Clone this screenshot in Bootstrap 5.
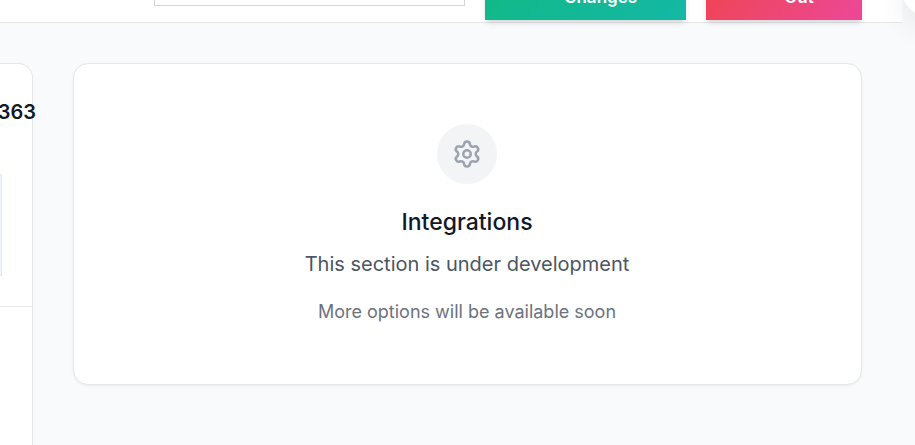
<!DOCTYPE html>
<html lang="en">
<head>
<meta charset="utf-8">
<meta name="viewport" content="width=device-width, initial-scale=1">
<title>Integrations</title>
<link href="https://cdn.jsdelivr.net/npm/bootstrap@5.3.0/dist/css/bootstrap.min.css" rel="stylesheet">
<style>
  body { font-family: Inter, "Liberation Sans", sans-serif; background: #f9fafb; color: #111827; }
  .page-shell { background: #f8fafc; overflow: hidden; }
  .topbar { height: 23px; margin-right: 13px; padding-right: 40px; gap: 20px; border-bottom: 1px solid #e5e7eb; }
  .search-box { flex: 0 1 311px; height: 50px; margin-bottom: 16px; border: 1px solid #d1d5db; border-radius: 0; }
  .action-btn { height: 70px; margin-bottom: 2px; padding: 0 0 11px 30px; border: 0; border-radius: 0; color: #fff; font-size: 17px; font-weight: 600; line-height: 24px; box-shadow: 0 4px 6px -1px rgba(0,0,0,.12), 0 2px 4px -2px rgba(0,0,0,.12); }
  .save-btn { width: 201px; background: linear-gradient(135deg, #10b981, #14b8a6); }
  .exit-btn { width: 156px; background: linear-gradient(135deg, #ef4444, #ec4899); }
  .float-bubble { position: absolute; top: -37px; right: -41px; width: 54px; height: 54px; background: #fff; box-shadow: 0 10px 30px rgba(0,0,0,.08); }
  .content-row { padding: 40px 53px 0 0; gap: 40px; }
  .side-panel { width: 33px; border: 1px solid #e5e7eb; border-left: 0; border-radius: 0 15px 0 0; border-bottom: 0; }
  .panel-head { height: 243px; padding-top: 32px; border-bottom: 1px solid #e5e7eb; }
  .panel-number { font-size: 20px; line-height: 32px; margin-right: -4px; }
  .info-edge { width: 2px; height: 102px; margin-top: 46px; background: #eff6ff; border: 1px solid #dbeafe; border-left: 0; }
  .main-panel { padding: 60px 21px 60px 20px; border: 1px solid #e5e7eb; border-radius: 15px; box-shadow: 0 1px 3px rgba(0,0,0,.06); }
  .icon-disc { width: 60px; height: 60px; background: #f3f4f6; color: #9ca3af; }
  .panel-title { margin: 20px 0 10px; font-size: 23px; line-height: 36px; }
  .panel-text { margin: 0 0 20px; color: #4b5563; font-size: 20px; line-height: 28px; }
  .panel-note { margin: 0; color: #6b7280; font-size: 18px; line-height: 26px; padding-top: 1px; margin-bottom: -1px; }
</style>
<script src="https://cdn.jsdelivr.net/npm/bootstrap@5.3.0/dist/js/bootstrap.bundle.min.js"></script>
</head>
<body>
<div class="page-shell position-relative vh-100 d-flex flex-column">
  <header class="topbar bg-white d-flex flex-shrink-0 justify-content-end align-items-end">
    <input class="form-control search-box" type="text" aria-label="Search">
    <button type="button" class="btn action-btn save-btn d-flex justify-content-center align-items-end">Changes</button>
    <button type="button" class="btn action-btn exit-btn d-flex justify-content-center align-items-end">Out</button>
  </header>
  <div class="float-bubble rounded-circle"></div>
  <div class="content-row d-flex flex-grow-1 align-items-start">
    <aside class="side-panel bg-white flex-shrink-0 align-self-stretch">
      <div class="panel-head">
        <div class="panel-number fw-semibold d-flex justify-content-end">363</div>
        <div class="info-edge"></div>
      </div>
    </aside>
    <main class="main-panel bg-white flex-grow-1 text-center">
      <div class="icon-disc rounded-circle mx-auto d-flex align-items-center justify-content-center">
        <svg width="30" height="30" viewBox="0 0 24 24" fill="none" stroke="currentColor" stroke-width="2" stroke-linecap="round" stroke-linejoin="round" aria-hidden="true"><path d="M9.671 4.136a2.34 2.34 0 0 1 4.659 0 2.34 2.34 0 0 0 3.319 1.915 2.34 2.34 0 0 1 2.33 4.033 2.34 2.34 0 0 0 0 3.831 2.34 2.34 0 0 1-2.33 4.033 2.34 2.34 0 0 0-3.319 1.915 2.34 2.34 0 0 1-4.659 0 2.34 2.34 0 0 0-3.32-1.915 2.34 2.34 0 0 1-2.33-4.033 2.34 2.34 0 0 0 0-3.831A2.34 2.34 0 0 1 6.35 6.051a2.34 2.34 0 0 0 3.319-1.915"/><circle cx="12" cy="12" r="3"/></svg>
      </div>
      <h1 class="panel-title fw-medium">Integrations</h1>
      <p class="panel-text">This section is under development</p>
      <p class="panel-note">More options will be available soon</p>
    </main>
  </div>
</div>
</body>
</html>
